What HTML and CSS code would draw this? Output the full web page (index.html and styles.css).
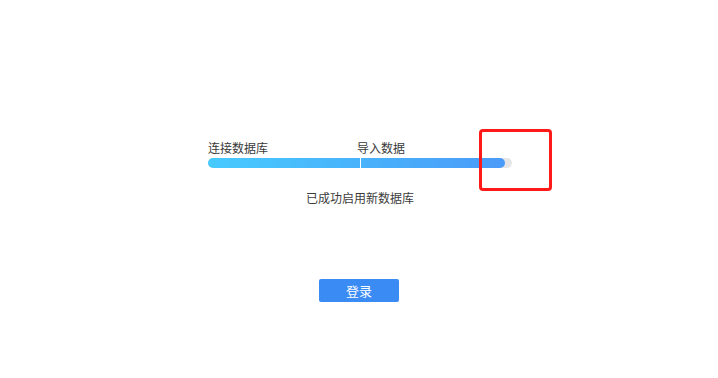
FILE: index.html
```html
<!DOCTYPE html>
<html lang="zh-CN">
<head>
<meta charset="utf-8">
<title>导入数据</title>
<link rel="stylesheet" href="styles.css">
</head>
<body>
<main class="page">
  <section class="progress-area">
    <div class="steps">
      <span class="step step-first">连接数据库</span>
      <span class="step">导入数据</span>
    </div>
    <div class="track">
      <div class="fill" style="width: 97.7%"></div>
      <span class="divider"></span>
    </div>
    <p class="status">已成功启用新数据库</p>
    <button class="login" type="button">登录</button>
  </section>
  <div class="highlight"></div>
</main>
</body>
</html>
```
FILE: styles.css
```css
html, body {
  margin: 0;
  padding: 0;
  background: #ffffff;
}
body {
  width: 718px;
  height: 378px;
  overflow: hidden;
  font-family: "Noto Sans CJK SC", "Noto Sans", sans-serif;
  color: #333333;
}
.page {
  position: relative;
  width: 718px;
  height: 378px;
}
.progress-area {
  width: 304px;
  margin: 0 auto;
  padding-top: 139px;
  display: flex;
  flex-direction: column;
  align-items: stretch;
  transform: translateX(1px);
}
.steps {
  display: flex;
  font-size: 12px;
  line-height: 17px;
  height: 17px;
  margin-bottom: 2px;
  color: #3a3a3a;
}
.step-first {
  width: 149px;
}
.track {
  position: relative;
  height: 10px;
  border-radius: 5px;
  background: #e6e6e6;
}
.fill {
  height: 10px;
  border-radius: 5px;
  background: linear-gradient(90deg, #47cafe 0%, #48b3fb 50%, #4b9bf8 100%);
}
.divider {
  position: absolute;
  left: 152px;
  top: 0;
  width: 1px;
  height: 10px;
  background: #ffffff;
}
.status {
  margin: 21px 0 0;
  font-size: 12px;
  line-height: 17px;
  text-align: center;
  color: #3c3c3c;
}
.login {
  align-self: center;
  margin-top: 73px;
  width: 80px;
  height: 23px;
  border: none;
  border-radius: 2px;
  background: #3b8bf5;
  color: #ffffff;
  font-family: "Noto Sans CJK SC", "Noto Sans", sans-serif;
  font-size: 13px;
  line-height: 23px;
  padding: 0;
  transform: translateX(-1px);
}
.highlight {
  position: absolute;
  left: 479px;
  top: 129px;
  width: 73px;
  height: 62px;
  box-sizing: border-box;
  border: 3px solid #ff1a1a;
  border-radius: 4px;
}
```
